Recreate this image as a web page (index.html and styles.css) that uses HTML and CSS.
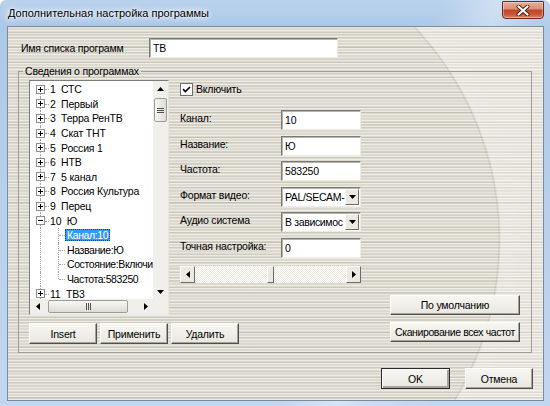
FILE: index.html
```html
<!DOCTYPE html>
<html lang="ru">
<head>
<meta charset="utf-8">
<title>Дополнительная настройка программы</title>
<link rel="stylesheet" href="styles.css">
</head>
<body>
<div class="window">
  <div class="titlebar">
    <span class="title">Дополнительная настройка программы</span>
    <button class="close" aria-label="Закрыть">
      <svg width="14" height="11" viewBox="0 0 14 11"><path class="x-out" d="M2.5 1.5l9 8M11.5 1.5l-9 8"/><path class="x-in" d="M2.5 1.5l9 8M11.5 1.5l-9 8"/></svg>
    </button>
  </div>
  <div class="client">
    <div class="name-row">
      <span class="name-label">Имя списка программ</span>
      <div class="input name-input">ТВ</div>
    </div>
    <fieldset class="group">
      <legend>Сведения о программах</legend>
      <div class="group-grid">
        <div class="tree">
          <div class="tree-items">
            <div class="node first"><span class="exp"><svg class="pm" width="9" height="9" viewBox="0 0 9 9"><rect x=".5" y=".5" width="8" height="8"/><path d="M2 4.5h5M4.5 2v5"/></svg></span><span class="lbl">1&nbsp;&nbsp;СТС</span></div>
            <div class="node"><span class="exp"><svg class="pm" width="9" height="9" viewBox="0 0 9 9"><rect x=".5" y=".5" width="8" height="8"/><path d="M2 4.5h5M4.5 2v5"/></svg></span><span class="lbl">2&nbsp;&nbsp;Первый</span></div>
            <div class="node"><span class="exp"><svg class="pm" width="9" height="9" viewBox="0 0 9 9"><rect x=".5" y=".5" width="8" height="8"/><path d="M2 4.5h5M4.5 2v5"/></svg></span><span class="lbl">3&nbsp;&nbsp;Терра РенТВ</span></div>
            <div class="node"><span class="exp"><svg class="pm" width="9" height="9" viewBox="0 0 9 9"><rect x=".5" y=".5" width="8" height="8"/><path d="M2 4.5h5M4.5 2v5"/></svg></span><span class="lbl">4&nbsp;&nbsp;Скат ТНТ</span></div>
            <div class="node"><span class="exp"><svg class="pm" width="9" height="9" viewBox="0 0 9 9"><rect x=".5" y=".5" width="8" height="8"/><path d="M2 4.5h5M4.5 2v5"/></svg></span><span class="lbl">5&nbsp;&nbsp;Россия 1</span></div>
            <div class="node"><span class="exp"><svg class="pm" width="9" height="9" viewBox="0 0 9 9"><rect x=".5" y=".5" width="8" height="8"/><path d="M2 4.5h5M4.5 2v5"/></svg></span><span class="lbl">6&nbsp;&nbsp;НТВ</span></div>
            <div class="node"><span class="exp"><svg class="pm" width="9" height="9" viewBox="0 0 9 9"><rect x=".5" y=".5" width="8" height="8"/><path d="M2 4.5h5M4.5 2v5"/></svg></span><span class="lbl">7&nbsp;&nbsp;5 канал</span></div>
            <div class="node"><span class="exp"><svg class="pm" width="9" height="9" viewBox="0 0 9 9"><rect x=".5" y=".5" width="8" height="8"/><path d="M2 4.5h5M4.5 2v5"/></svg></span><span class="lbl">8&nbsp;&nbsp;Россия Культура</span></div>
            <div class="node"><span class="exp"><svg class="pm" width="9" height="9" viewBox="0 0 9 9"><rect x=".5" y=".5" width="8" height="8"/><path d="M2 4.5h5M4.5 2v5"/></svg></span><span class="lbl">9&nbsp;&nbsp;Перец</span></div>
            <div class="node"><span class="exp"><svg class="pm" width="9" height="9" viewBox="0 0 9 9"><rect x=".5" y=".5" width="8" height="8"/><path d="M2 4.5h5"/></svg></span><span class="lbl">10&nbsp;&nbsp;Ю</span></div>
            <div class="node child"><span class="branch"></span><span class="lbl sel">Канал:10</span></div>
            <div class="node child"><span class="branch"></span><span class="lbl">Название:Ю</span></div>
            <div class="node child"><span class="branch"></span><span class="lbl">Состояние:Включи</span></div>
            <div class="node child"><span class="branch last"></span><span class="lbl">Частота:583250</span></div>
            <div class="node"><span class="exp"><svg class="pm" width="9" height="9" viewBox="0 0 9 9"><rect x=".5" y=".5" width="8" height="8"/><path d="M2 4.5h5M4.5 2v5"/></svg></span><span class="lbl">11&nbsp;&nbsp;ТВ3</span></div>
          </div>
          <div class="vscroll">
            <div class="sb-btn"><svg width="7" height="4" viewBox="0 0 7 4"><polygon points="0,4 7,4 3.5,0"/></svg></div>
            <div class="vthumb"><svg width="7" height="5" viewBox="0 0 7 5"><path d="M0 .5h7M0 2.5h7M0 4.5h7"/></svg></div>
            <div class="sb-fill"></div>
            <div class="sb-btn"><svg width="7" height="4" viewBox="0 0 7 4"><polygon points="0,0 7,0 3.5,4"/></svg></div>
          </div>
          <div class="hscroll">
            <div class="sb-btn"><svg width="4" height="7" viewBox="0 0 4 7"><polygon points="4,0 4,7 0,3.5"/></svg></div>
            <div class="hthumb"><svg width="5" height="7" viewBox="0 0 5 7"><path d="M.5 0v7M2.5 0v7M4.5 0v7"/></svg></div>
            <div class="sb-fill"></div>
            <div class="sb-btn"><svg width="4" height="7" viewBox="0 0 4 7"><polygon points="0,0 0,7 4,3.5"/></svg></div>
          </div>
          <div class="corner"></div>
        </div>

        <div class="form">
          <div class="check-row">
            <svg class="checkbox" width="13" height="13" viewBox="0 0 13 13"><rect x=".5" y=".5" width="12" height="12"/><path d="M3 6.2l2.4 2.4L10 4"/></svg>
            <span>Включить</span>
          </div>
          <div class="frow"><span class="flabel">Канал:</span><div class="input fctl">10</div></div>
          <div class="frow"><span class="flabel">Название:</span><div class="input fctl">Ю</div></div>
          <div class="frow"><span class="flabel">Частота:</span><div class="input fctl">583250</div></div>
          <div class="frow"><span class="flabel">Формат видео:</span><div class="input fctl combo"><span class="val">PAL/SECAM-</span><span class="dd"><svg width="7" height="4" viewBox="0 0 7 4"><polygon points="0,0 7,0 3.5,4"/></svg></span></div></div>
          <div class="frow"><span class="flabel">Аудио система</span><div class="input fctl combo"><span class="val">В зависимос</span><span class="dd"><svg width="7" height="4" viewBox="0 0 7 4"><polygon points="0,0 7,0 3.5,4"/></svg></span></div></div>
          <div class="frow"><span class="flabel">Точная настройка:</span><div class="input fctl">0</div></div>
          <div class="slider">
            <div class="sl-btn"><svg width="4" height="7" viewBox="0 0 4 7"><polygon points="4,0 4,7 0,3.5"/></svg></div>
            <div class="sl-track left"></div>
            <div class="sl-thumb"></div>
            <div class="sl-track right"></div>
            <div class="sl-btn"><svg width="4" height="7" viewBox="0 0 4 7"><polygon points="0,0 0,7 4,3.5"/></svg></div>
          </div>
        </div>

        <div class="left-buttons">
          <button class="btn w68">Insert</button>
          <button class="btn w68">Применить</button>
          <button class="btn w68">Удалить</button>
        </div>

        <div class="right-buttons">
          <button class="btn wide">По умолчанию</button>
          <button class="btn wide tight">Сканирование всех частот</button>
        </div>
      </div>
    </fieldset>
    <div class="dialog-buttons">
      <button class="btn default ok">OK</button>
      <button class="btn w68">Отмена</button>
    </div>
  </div>
</div>
</body>
</html>
```
FILE: styles.css
```css
html, body {
  margin: 0;
  padding: 0;
}
body {
  width: 550px;
  height: 406px;
  overflow: hidden;
  font-family: "Liberation Sans", Arial, sans-serif;
  font-size: 10.5px;
  letter-spacing: -0.2px;
  color: #000;
  background: #fff;
}

.window {
  box-sizing: border-box;
  width: 550px;
  height: 406px;
  display: flex;
  flex-direction: column;
  border-radius: 6px 6px 0 0;
  background:
    linear-gradient(112deg, transparent 62%, rgba(255,255,255,0.35) 70%, rgba(255,255,255,0.1) 76%, transparent 84%),
    linear-gradient(180deg, #b9d1ec 0%, #acc8e8 7%, #b8d0eb 50%, #c1d7ef 100%);
}

.titlebar {
  flex: none;
  height: 26px;
  display: flex;
  align-items: center;
  justify-content: space-between;
}
.title {
  margin-left: 8px;
  font-size: 11px;
  letter-spacing: 0;
  text-shadow: 0 0 6px #fff, 0 0 10px #fff, 0 0 3px rgba(255,255,255,0.9);
}
.close {
  align-self: flex-start;
  margin: 1px 6px 0 0;
  width: 42px;
  height: 18px;
  padding: 0;
  border: 1px solid #6b2a1f;
  border-radius: 1px 1px 4px 4px;
  background: linear-gradient(180deg, #e9ad9d 0%, #dc8f79 42%, #c2452b 52%, #c85638 78%, #dc8469 100%);
  box-shadow: inset 0 0 0 1px rgba(255,255,255,0.35);
  display: flex;
  align-items: center;
  justify-content: center;
}
.close svg { display: block; }
.x-out { fill: none; stroke: #4a1d14; stroke-width: 4; stroke-linecap: round; }
.x-in { fill: none; stroke: #fff; stroke-width: 2.2; stroke-linecap: round; }

.client {
  flex: 1;
  margin: 0 6px 5px 7px;
  border: 1px solid #7c8a9b;
  display: flex;
  flex-direction: column;
  background:
    radial-gradient(circle 330px at 182px 213px, transparent 308px, rgba(110,100,80,0.14) 309px, rgba(255,255,255,0.34) 311px, rgba(255,255,255,0.3) 330px),
    repeating-linear-gradient(180deg, rgba(255,255,255,0.5) 0 1px, transparent 1px 3px),
    repeating-linear-gradient(180deg, rgba(100,90,70,0.13) 0 1px, transparent 1px 5px),
    repeating-linear-gradient(180deg, transparent 0 6px, rgba(100,90,70,0.08) 6px 8px, transparent 8px 13px),
    #dcd9ce;
}

.name-row {
  display: flex;
  align-items: center;
  margin: 11px 0 0 13px;
}
.name-label { width: 128px; }

.input {
  box-sizing: border-box;
  display: flex;
  align-items: center;
  background: #fff;
  border: 1px solid;
  border-color: #7a7a77 #ecebe6 #ecebe6 #7a7a77;
  box-shadow: inset 1px 1px 0 #b4b3ad;
  padding: 0 3px;
  white-space: nowrap;
  overflow: hidden;
}
.name-input { width: 189px; height: 20px; }

.group {
  box-sizing: border-box;
  width: 514px;
  margin: 6px 0 0 10px;
  padding: 0 0 8px 0;
  min-width: 0;
  border: 1px solid #9f9d94;
}
.group legend {
  margin-left: 4px;
  padding: 0 2px;
  line-height: 14px;
}

.group-grid {
  display: grid;
  grid-template-columns: 140px 11px 181px 29px 130px;
  grid-template-rows: 208px 27px 29px;
  margin: 2px 0 0 10px;
}

/* tree */
.tree {
  grid-column: 1;
  grid-row: 1 / 3;
  box-sizing: border-box;
  border: 1px solid;
  border-color: #7d7d7a #e6e5df #e6e5df #7d7d7a;
  display: grid;
  grid-template-columns: 1fr 15px;
  grid-template-rows: 1fr 15px;
  background: #fff;
}
.tree-items {
  overflow: hidden;
  padding: 1px 0 0 6px;
  min-width: 0;
}
.node {
  position: relative;
  display: flex;
  align-items: center;
  height: 14.6px;
  white-space: nowrap;
}
.node::before {
  content: "";
  position: absolute;
  left: 4px;
  top: 0;
  bottom: 0;
  border-left: 1px dotted #a3a3a3;
}
.node.first::before { top: 50%; }
.exp {
  position: relative;
  flex: none;
  width: 14px;
  align-self: stretch;
  display: flex;
  align-items: center;
}
.exp::after {
  content: "";
  position: absolute;
  left: 9px;
  width: 4px;
  top: 50%;
  border-top: 1px dotted #a3a3a3;
}
.pm { position: relative; z-index: 1; display: block; }
.pm rect { fill: #fff; stroke: #8e8e8e; }
.pm path { stroke: #000; fill: none; }
.lbl { line-height: 12px; }
.node.child { padding-left: 22px; }
.branch {
  position: relative;
  flex: none;
  width: 7px;
  align-self: stretch;
}
.branch::before {
  content: "";
  position: absolute;
  left: 0;
  top: 0;
  bottom: 0;
  border-left: 1px dotted #a3a3a3;
}
.branch.last::before { bottom: 50%; }
.branch::after {
  content: "";
  position: absolute;
  left: 1px;
  right: 0;
  top: 50%;
  border-top: 1px dotted #a3a3a3;
}
.child .lbl { padding: 0 2px; letter-spacing: -0.4px; }
.sel {
  background: #3399ff;
  color: #fff;
  outline: 1px dotted #174a86;
  outline-offset: -1px;
}

.vscroll, .hscroll, .corner { background: #f0efeb; }
.vscroll {
  display: flex;
  flex-direction: column;
}
.hscroll { display: flex; }
.sb-btn {
  flex: none;
  width: 15px;
  height: 15px;
  display: flex;
  align-items: center;
  justify-content: center;
}
.sb-btn svg, .sl-btn svg, .dd svg { display: block; fill: #000; }
.sb-fill { flex: 1; }
.vthumb {
  flex: none;
  box-sizing: border-box;
  height: 24px;
  margin: 2px 1px 0;
  border: 1px solid #9d9c97;
  border-radius: 2px;
  background: linear-gradient(90deg, #f7f7f5, #dddcd6);
  display: flex;
  align-items: center;
  justify-content: center;
}
.hthumb {
  flex: none;
  box-sizing: border-box;
  width: 80px;
  margin: 1px 0 1px 3px;
  border: 1px solid #9d9c97;
  border-radius: 2px;
  background: linear-gradient(180deg, #f7f7f5, #dddcd6);
  display: flex;
  align-items: center;
  justify-content: center;
}
.vthumb path, .hthumb path { stroke: #505050; fill: none; }

/* form */
.form {
  grid-column: 3;
  grid-row: 1;
  display: flex;
  flex-direction: column;
}
.check-row {
  box-sizing: border-box;
  height: 30px;
  padding-top: 3px;
  display: flex;
  align-items: flex-start;
  gap: 3px;
  line-height: 13px;
}
.checkbox { display: block; flex: none; }
.checkbox rect { fill: #fff; stroke: #707070; }
.checkbox path { fill: none; stroke: #000; stroke-width: 1.7; }
.frow {
  height: 25.6px;
  display: flex;
  align-items: flex-start;
}
.flabel {
  width: 101px;
  flex: none;
  padding-top: 1px;
  line-height: 14px;
}
.fctl { width: 80px; height: 20px; }
.combo { padding: 0 1px 0 3px; }
.combo .val { flex: 1; overflow: hidden; white-space: nowrap; letter-spacing: -0.35px; }
.dd {
  flex: none;
  box-sizing: border-box;
  width: 14px;
  height: 16px;
  border: 1px solid;
  border-color: #fbfbf9 #6a6a66 #6a6a66 #fbfbf9;
  background: #ebe9e2;
  display: flex;
  align-items: center;
  justify-content: center;
}

.slider {
  margin-top: 2.4px;
  height: 17px;
  display: flex;
}
.sl-btn, .sl-thumb {
  flex: none;
  box-sizing: border-box;
  border: 1px solid;
  border-color: #fbfbf9 #6a6a66 #6a6a66 #fbfbf9;
  background: #ebe9e2;
}
.sl-btn {
  width: 15px;
  display: flex;
  align-items: center;
  justify-content: center;
}
.sl-thumb { width: 7px; }
.sl-track {
  background: repeating-conic-gradient(#ffffff 0 25%, #e9e7e0 0 50%) 0 0 / 2px 2px;
}
.sl-track.left { width: 72px; }
.sl-track.right { flex: 1; }

/* buttons */
.btn {
  box-sizing: border-box;
  height: 21px;
  padding: 0;
  font-family: "Liberation Sans", Arial, sans-serif;
  font-size: 10.5px;
  letter-spacing: -0.2px;
  color: #000;
  border: 1px solid;
  border-color: #fdfdfb #4f4f4c #4f4f4c #fdfdfb;
  box-shadow: inset -1px -1px 0 #a5a39b;
  background: linear-gradient(180deg, #f7f6f2, #e9e7e0);
  white-space: nowrap;
}
.w68 { width: 68px; }
.left-buttons {
  grid-column: 1 / 4;
  grid-row: 3;
  align-self: end;
  display: flex;
  gap: 3px;
}
.right-buttons {
  grid-column: 5;
  grid-row: 2 / 4;
  align-self: end;
  margin-bottom: 2px;
  display: flex;
  flex-direction: column;
  gap: 7px;
}
.wide { width: 130px; height: 20px; }
.tight { letter-spacing: -0.4px; }

.dialog-buttons {
  display: flex;
  justify-content: flex-end;
  gap: 15px;
  margin: 15px 10px 0 0;
}
.ok { width: 69px; }
.btn.default {
  border: 1px solid #2a2a28;
  box-shadow: inset 1px 1px 0 #fdfdfb, inset -2px -2px 0 #a5a39b;
}
```
